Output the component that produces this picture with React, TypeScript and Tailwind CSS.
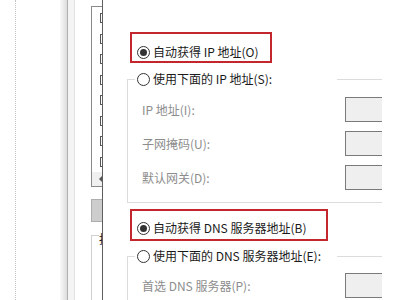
const font = { fontFamily: '"Noto Sans CJK SC", "Noto Sans", sans-serif' }

function Radio({ checked }: { checked?: boolean }) {
  return (
    <span className="flex h-[13px] w-[13px] shrink-0 items-center justify-center rounded-full border border-[#333333] bg-white">
      {checked && <span className="h-[7px] w-[7px] rounded-full bg-[#333333]" />}
    </span>
  )
}

function RadioRow({ checked, label, className }: { checked?: boolean; label: string; className?: string }) {
  return (
    <div className={'flex h-[16px] items-center gap-[3px] text-[12px] text-[#1a1a1a] ' + (className ?? '')}>
      <Radio checked={checked} />
      <span className="whitespace-nowrap leading-none">{label}</span>
    </div>
  )
}

function FieldRow({ label, className }: { label: string; className?: string }) {
  return (
    <div className={'flex h-[25px] items-center pl-[14px] ' + (className ?? '')}>
      <span className="w-[203px] whitespace-nowrap text-[12px] leading-none text-[#8d8d8d]">{label}</span>
      <span className="h-[25px] w-[80px] shrink-0 border border-[#7a7a7a] bg-[#efefef]" />
    </div>
  )
}

function CheckItem() {
  return (
    <div className="flex h-[21px] items-center pl-[8px]">
      <span className="flex h-[10px] w-[10px] shrink-0 items-center justify-center border border-[#555555] bg-white">
        <span className="h-[4px] w-[4px] bg-black" />
      </span>
    </div>
  )
}

export default function App() {
  return (
    <div className="flex h-[300px] w-[400px] overflow-hidden bg-white" style={font}>
      {/* far background window */}
      <div className="h-full w-[60px] shrink-0">
        <div className="ml-[15px] h-full border-l border-dotted border-[#c4c4c4]" />
      </div>
      <div className="h-full w-[7px] shrink-0 bg-gradient-to-r from-[#fafafa] to-[#dcdcdc]" />

      {/* middle window */}
      <div className="flex h-full w-[35px] shrink-0 overflow-hidden border-l border-[#b0b0b0]">
        <div className="h-full w-[7px] shrink-0 border-r border-[#e2e2e2] bg-[#f4f4f4]" />
        <div className="flex flex-col pl-[16px]">
          <div className="mt-[6px] flex h-[181px] w-[40px] flex-col border border-[#8a8a8a] pt-[1px]">
            <CheckItem />
            <CheckItem />
            <CheckItem />
            <CheckItem />
            <CheckItem />
            <CheckItem />
            <CheckItem />
            <CheckItem />
            <div className="mt-auto flex h-[14px] items-center bg-[#f0f0f0] pl-[6px]">
              <svg width="6" height="8" viewBox="0 0 6 8">
                <path d="M5 0 L1 4 L5 8 Z" fill="#555555" />
              </svg>
            </div>
          </div>
          <div className="mt-[12px] h-[28px] w-[40px] border border-[#adadad] bg-[#cdcdcd]" />
          <div className="relative mt-[13px] h-[80px] w-[40px] border-l border-t border-[#d0d0d0]">
            <span className="absolute left-[7px] top-[-3px] bg-white text-[12px] leading-none text-[#1a1a1a]">按</span>
          </div>
        </div>
      </div>

      {/* dialog */}
      <div className="h-full w-[1px] shrink-0 bg-[#5f5f5f]" />
      <div className="relative h-full w-[279px] shrink-0 overflow-hidden bg-white">
        <RadioRow checked label="自动获得 IP 地址(O)" className="ml-[34px] mt-[44px]" />

        <div className="ml-[24px] mt-[19px] h-[124px] w-[300px] border border-r-0 border-[#dcdcdc]">
          <div className="-mt-[9px] ml-[7px] w-[202px] bg-white pl-[2px]">
            <RadioRow label="使用下面的 IP 地址(S):" />
          </div>
          <FieldRow label="IP 地址(I):" className="mt-[10px]" />
          <FieldRow label="子网掩码(U):" className="mt-[9px]" />
          <FieldRow label="默认网关(D):" className="mt-[9px]" />
        </div>

        <RadioRow checked label="自动获得 DNS 服务器地址(B)" className="ml-[34px] mt-[17px]" />

        <div className="ml-[24px] mt-[20px] h-[80px] w-[300px] border-l border-t border-[#dcdcdc]">
          <div className="-mt-[9px] ml-[7px] w-[202px] bg-white pl-[2px]">
            <RadioRow label="使用下面的 DNS 服务器地址(E):" />
          </div>
          <FieldRow label="首选 DNS 服务器(P):" className="mt-[9px]" />
        </div>

        {/* annotation boxes */}
        <div className="absolute left-[27px] top-[32px] h-[31px] w-[142px] border-2 border-[#c4262e]" />
        <div className="absolute left-[27px] top-[209px] h-[32px] w-[198px] border-2 border-[#c4262e]" />
      </div>
    </div>
  )
}
